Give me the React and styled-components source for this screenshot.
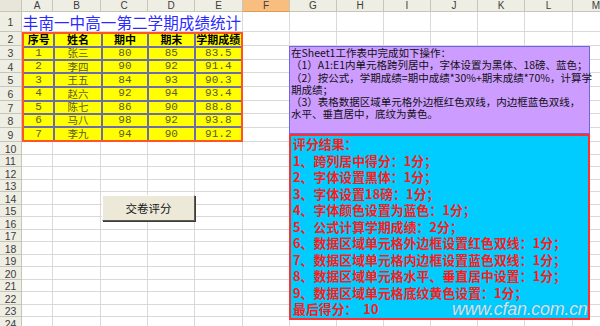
import React from "react";
import styled, { createGlobalStyle } from "styled-components";

const columns = [
  { name: "A", width: 31 },
  { name: "B", width: 48 },
  { name: "C", width: 47 },
  { name: "D", width: 47 },
  { name: "E", width: 48 },
  { name: "F", width: 47 },
  { name: "G", width: 47 },
  { name: "H", width: 47 },
  { name: "I", width: 47 },
  { name: "J", width: 47 },
  { name: "K", width: 47 },
  { name: "L", width: 48 },
  { name: "M", width: 47 },
];

const tableRowHeights = [14, 14, 13, 14, 14, 13, 14, 14];
const lowerRowHeights = [13, 12, 13, 12, 13, 12, 13, 12, 13, 12, 13, 12, 13, 12, 13];
const rowHeights = [20, ...tableRowHeights, ...lowerRowHeights];

const tableHead = ["序号", "姓名", "期中", "期末", "学期成绩"];
const tableRows = [
  ["1", "张三", "80", "85", "83.5"],
  ["2", "李四", "90", "92", "91.4"],
  ["3", "王五", "84", "93", "90.3"],
  ["4", "赵六", "92", "94", "93.4"],
  ["5", "陈七", "86", "90", "88.8"],
  ["6", "马八", "98", "92", "93.8"],
  ["7", "李九", "94", "90", "91.2"],
];

const noteLines = [
  "在Sheet1工作表中完成如下操作：",
  "（1）A1:E1内单元格跨列居中，字体设置为黑体、18磅、蓝色；",
  "（2）按公式，学期成绩=期中成绩*30%+期末成绩*70%，计算学",
  "期成绩；",
  "（3）表格数据区域单元格外边框红色双线，内边框蓝色双线，",
  "水平、垂直居中，底纹为黄色。",
];

const scoreLines = [
  "评分结果：",
  "1、跨列居中得分：1分；",
  "2、字体设置黑体：1分；",
  "3、字体设置18磅：1分；",
  "4、字体颜色设置为蓝色：1分；",
  "5、公式计算学期成绩：2分；",
  "6、数据区域单元格外边框设置红色双线：1分；",
  "7、数据区域单元格内边框设置蓝色双线：1分；",
  "8、数据区域单元格水平、垂直居中设置：1分；",
  "9、数据区域单元格底纹黄色设置：1分；",
  "最后得分：  10",
];

const GlobalStyle = createGlobalStyle`
  html, body {
    margin: 0;
    padding: 0;
    background: #ffffff;
    overflow: hidden;
  }
  body {
    font-family: "Noto Sans CJK SC", "Liberation Sans", sans-serif;
  }
`;

const Viewport = styled.div`
  width: 600px;
  height: 326px;
  overflow: hidden;
  position: relative;
`;

const Sheet = styled.div`
  position: relative;
  display: grid;
  grid-template-columns: 22px ${columns.map((c) => c.width + "px").join(" ")};
  grid-template-rows: 12px ${rowHeights.map((h) => h + "px").join(" ")};
  width: max-content;
`;

const HeaderBase = styled.div`
  box-sizing: border-box;
  display: flex;
  align-items: center;
  justify-content: center;
  font-family: "Liberation Sans", sans-serif;
  font-size: 10px;
  color: #3c3c3c;
  background: #efeee4;
  border-right: 1px solid #c7c5b6;
  border-bottom: 1px solid #c7c5b6;
`;

const Corner = styled(HeaderBase)`
  background: #e8e6da;
`;

const ColHeader = styled(HeaderBase)`
  background: ${(p) => (p.$active ? "#f7be80" : "#efeee4")};
  border-bottom-color: ${(p) => (p.$active ? "#e09a52" : "#c7c5b6")};
  line-height: 1;
  padding-top: 1px;
`;

const RowHeader = styled(HeaderBase)`
  font-size: 10.5px;
  padding-top: 1px;
`;

const Cell = styled.div`
  box-sizing: border-box;
  border-right: 1px solid #d9d9d9;
  border-bottom: 1px solid #d9d9d9;
`;

const TitleCell = styled.div`
  grid-column: span 5;
  box-sizing: border-box;
  border-bottom: 1px solid #d9d9d9;
  border-right: 1px solid #d9d9d9;
  display: flex;
  align-items: center;
  justify-content: center;
  font-size: 15.5px;
  color: #2a2aff;
  white-space: nowrap;
  letter-spacing: 0.1px;
  padding-top: 1px;
`;

const DataBlock = styled.div`
  grid-column: 2 / 7;
  grid-row: 3 / 11;
  box-sizing: border-box;
  border: 2px solid #ff5522;
  background: #6c6caa;
  display: grid;
  grid-template-columns: 31fr 48fr 47fr 47fr 48fr;
  grid-template-rows: ${tableRowHeights.map((h) => h + "fr").join(" ")};
  gap: 2px;
`;

const DataCell = styled.div`
  background: #ffff00;
  display: flex;
  align-items: center;
  justify-content: center;
  white-space: nowrap;
  font-size: ${(p) => (p.$head ? "11px" : p.$mono ? "11px" : "10.5px")};
  font-weight: ${(p) => (p.$head ? 700 : 400)};
  color: ${(p) => (p.$head ? "#000000" : "#5a5a26")};
  font-family: ${(p) =>
    p.$mono ? '"Liberation Mono", monospace' : '"Noto Sans CJK SC", sans-serif'};
  line-height: 1;
`;

const NoteBox = styled.div`
  position: absolute;
  left: 289px;
  top: 46px;
  width: 301px;
  height: 88px;
  box-sizing: border-box;
  background: #cc9cff;
  border: 1px solid #6b66e6;
  padding: 0 0 0 1px;
  font-size: 10.5px;
  line-height: 12.3px;
  color: #111111;
`;

const ScoreBox = styled.div`
  position: absolute;
  left: 289px;
  top: 134px;
  width: 301px;
  height: 186px;
  box-sizing: border-box;
  background: #00ccff;
  border: 2px solid #ff3030;
  padding: 0 0 0 2px;
  font-size: 12.9px;
  font-weight: 700;
  line-height: 16.5px;
  color: #ff1a1a;
`;

const Line = styled.div`
  white-space: pre;
`;

const GradeButton = styled.button`
  position: absolute;
  left: 102px;
  top: 195px;
  width: 93px;
  height: 26px;
  box-sizing: border-box;
  margin: 0;
  padding: 0;
  background: #ece9d8;
  border: 1px solid;
  border-color: #ffffff #5c5b55 #5c5b55 #ffffff;
  box-shadow: 1px 1px 0 #3e3d38;
  font-family: "Noto Sans CJK SC", sans-serif;
  font-size: 11.5px;
  color: #111111;
  cursor: pointer;
`;

const Watermark = styled.div`
  position: absolute;
  left: 452px;
  top: 299px;
  font-family: "Liberation Sans", sans-serif;
  font-style: italic;
  font-size: 18px;
  letter-spacing: -0.3px;
  color: rgba(226, 238, 248, 0.9);
  text-shadow: 0 0 1px rgba(90, 120, 140, 0.7);
  pointer-events: none;
`;

function App() {
  const blankCells = (row, from) =>
    columns.slice(from).map((c) => <Cell key={row + c.name} />);

  return (
    <Viewport>
      <GlobalStyle />
      <Sheet>
        <Corner />
        {columns.map((c) => (
          <ColHeader key={c.name} $active={c.name === "F"}>
            {c.name}
          </ColHeader>
        ))}

        <RowHeader>1</RowHeader>
        <TitleCell>丰南一中高一第二学期成绩统计</TitleCell>
        {blankCells(1, 5)}

        {tableRowHeights.map((h, i) => (
          <React.Fragment key={"t" + i}>
            <RowHeader>{i + 2}</RowHeader>
            {i === 0 && (
              <DataBlock>
                {tableHead.map((t) => (
                  <DataCell key={t} $head>
                    {t}
                  </DataCell>
                ))}
                {tableRows.map((r) =>
                  r.map((v, j) => (
                    <DataCell key={r[0] + j} $mono={j !== 1}>
                      {v}
                    </DataCell>
                  ))
                )}
              </DataBlock>
            )}
            {blankCells(i + 2, 5)}
          </React.Fragment>
        ))}

        {lowerRowHeights.map((h, i) => (
          <React.Fragment key={"l" + i}>
            <RowHeader>{i + 10}</RowHeader>
            {blankCells(i + 10, 0)}
          </React.Fragment>
        ))}

        <NoteBox>
          {noteLines.map((l) => (
            <Line key={l}>{l}</Line>
          ))}
        </NoteBox>

        <ScoreBox>
          {scoreLines.map((l) => (
            <Line key={l}>{l}</Line>
          ))}
        </ScoreBox>

        <GradeButton>交卷评分</GradeButton>
        <Watermark>www.cfan.com.cn</Watermark>
      </Sheet>
    </Viewport>
  );
}

export default App;
